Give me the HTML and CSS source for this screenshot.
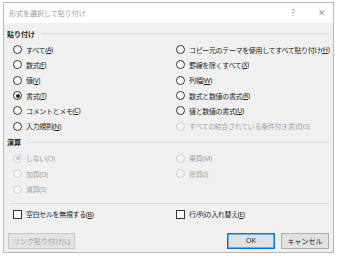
FILE: index.html
```html
<!DOCTYPE html>
<html lang="ja">
<head>
    <meta charset="UTF-8">
    <title>形式を選択して貼り付け</title>
    <link rel="stylesheet" href="styles.css">
</head>
<body>
    <div class="dialog">
        <div class="titlebar">
            <span class="title">形式を選択して貼り付け</span>
            <span class="help">?</span>
            <span class="close">&#x2715;</span>
        </div>
        <div class="content">
            <div class="group-head"><span>貼り付け</span><div class="rule"></div></div>
            <div class="options">
                <div class="opt"><span class="radio"></span>すべて(<u>A</u>)</div>
                <div class="opt"><span class="radio"></span>コピー元のテーマを使用してすべて貼り付け(<u>H</u>)</div>
                <div class="opt"><span class="radio"></span>数式(<u>F</u>)</div>
                <div class="opt"><span class="radio"></span>罫線を除くすべて(<u>X</u>)</div>
                <div class="opt"><span class="radio"></span>値(<u>V</u>)</div>
                <div class="opt"><span class="radio"></span>列幅(<u>W</u>)</div>
                <div class="opt"><span class="radio on"></span>書式(<u>T</u>)</div>
                <div class="opt"><span class="radio"></span>数式と数値の書式(<u>R</u>)</div>
                <div class="opt"><span class="radio"></span>コメントとメモ(<u>C</u>)</div>
                <div class="opt"><span class="radio"></span>値と数値の書式(<u>U</u>)</div>
                <div class="opt"><span class="radio"></span>入力規則(<u>N</u>)</div>
                <div class="opt off"><span class="radio"></span>すべての結合されている条件付き書式(G)</div>
            </div>

            <div class="group-head calc"><span>演算</span><div class="rule"></div></div>
            <div class="options">
                <div class="opt off"><span class="radio on"></span>しない(O)</div>
                <div class="opt off"><span class="radio"></span>乗算(M)</div>
                <div class="opt off"><span class="radio"></span>加算(D)</div>
                <div class="opt off"><span class="radio"></span>除算(I)</div>
                <div class="opt off"><span class="radio"></span>減算(S)</div>
            </div>

            <div class="rule sep"></div>

            <div class="options checks">
                <div class="opt"><span class="check"></span>空白セルを無視する(<u>B</u>)</div>
                <div class="opt"><span class="check"></span>行/列の入れ替え(<u>E</u>)</div>
            </div>

            <div class="buttons">
                <button class="btn link" disabled>リンク貼り付け(L)</button>
                <div class="spacer"></div>
                <button class="btn ok">OK</button>
                <button class="btn">キャンセル</button>
            </div>
        </div>
    </div>
</body>
</html>
```

FILE: styles.css
```css
body {
    margin: 0;
    background-color: #ffffff;
    font-family: 'Noto Sans', 'Noto Sans CJK JP', sans-serif;
    font-size: 7px;
    color: #1e1e1e;
}
.dialog {
    margin: 2px 0 0 3px;
    width: 331px;
    height: 251px;
    box-sizing: border-box;
    border: 1px solid #b9b9b9;
    background-color: #f0f0f0;
    display: flex;
    flex-direction: column;
}
.titlebar {
    height: 19px;
    background-color: #ffffff;
    display: flex;
    align-items: center;
    padding: 0 0 1px 5px;
    color: #9a9a9a;
}
.title {
    flex: 1;
}
.help {
    width: 12px;
    text-align: center;
    margin-right: 17px;
    font-size: 8px;
}
.close {
    width: 12px;
    text-align: center;
    margin-right: 5px;
    font-size: 9px;
}
.content {
    padding: 5px 4px 0 3px;
}
.group-head {
    display: flex;
    align-items: center;
    height: 11px;
    font-weight: bold;
    color: #222;
}
.group-head span {
    margin-right: 6px;
}
.rule {
    flex: 1;
    height: 1px;
    background-color: #dcdcdc;
}
.options {
    display: grid;
    grid-template-columns: 163px 1fr;
    grid-auto-rows: 15.3px;
    padding-left: 6px;
    margin-top: 3px;
}
.opt {
    display: flex;
    align-items: center;
    white-space: nowrap;
    letter-spacing: -0.35px;
}
.opt u {
    text-decoration: underline;
}
.radio {
    width: 7px;
    height: 7px;
    border: 1px solid #333;
    border-radius: 50%;
    background-color: #ffffff;
    margin-right: 4px;
    display: flex;
    align-items: center;
    justify-content: center;
    flex-shrink: 0;
}
.radio.on::after {
    content: '';
    width: 4px;
    height: 4px;
    border-radius: 50%;
    background-color: #222;
}
.off {
    color: #a6a6a6;
}
.off .radio {
    border-color: #cfcfcf;
    background-color: #f4f4f4;
}
.off .radio.on::after {
    background-color: #c8c8c8;
}
.calc {
    margin-top: 3px;
}
.sep {
    flex: none;
    margin: 6px 0 0 3px;
}
.checks {
    margin-top: 3px;
    grid-template-columns: 163px 1fr;
}
.check {
    width: 7px;
    height: 7px;
    border: 1px solid #333;
    background-color: #ffffff;
    margin-right: 4px;
    flex-shrink: 0;
}
.buttons {
    display: flex;
    margin-top: 11px;
    padding-left: 1px;
}
.spacer {
    flex: 1;
}
.btn {
    font-family: inherit;
    font-size: 7px;
    width: 48px;
    height: 16px;
    padding: 0;
    background-color: #e1e1e1;
    border: 1px solid #adadad;
    color: #1e1e1e;
    margin-left: 6px;
}
.btn.link {
    width: 67px;
    margin-left: 0;
    color: #a0a0a0;
    border-color: #c8c8c8;
    background-color: #e3e3e3;
}
.btn.ok {
    border: 1px solid #0078d7;
    box-shadow: inset 0 0 0 0.5px #0078d7;
}
```
